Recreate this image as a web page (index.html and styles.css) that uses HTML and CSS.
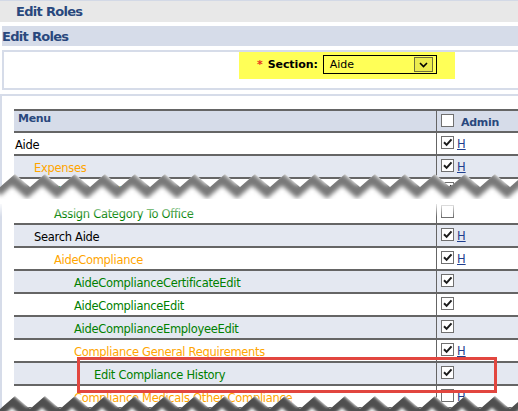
FILE: index.html
```html
<!DOCTYPE html>
<html>
<head>
<meta charset="utf-8">
<title>Edit Roles</title>
<link rel="stylesheet" href="styles.css">
</head>
<body>
<div class="page-title">Edit Roles</div>
<div class="section">
  <div class="section-title">Edit Roles</div>
  <div class="filter-box">
    <div class="filter">
      <span class="req">*</span>
      <span class="filter-label">Section:</span>
      <div class="select">
        <span class="select-value">Aide</span>
        <span class="select-btn"><svg viewBox="0 0 9 6" width="9" height="6"><path d="M1 1l3.5 3.5L8 1"/></svg></span>
      </div>
    </div>
  </div>
</div>
<div class="grid-box">
  <div class="grid">
    <div class="row head">
      <div class="menu-cell head-cell">Menu</div>
      <div class="admin-cell"><span class="cb"></span><span class="head-admin">Admin</span></div>
    </div>
    <div class="row">
      <div class="menu-cell lv0 black">Aide</div>
      <div class="admin-cell"><span class="cb"><svg viewBox="0 0 11 11"><path d="M2 5.3l2.6 2.6 4.9-5.6"/></svg></span><a class="hist">H</a></div>
    </div>
    <div class="row alt">
      <div class="menu-cell lv1 orange">Expenses</div>
      <div class="admin-cell"><span class="cb"><svg viewBox="0 0 11 11"><path d="M2 5.3l2.6 2.6 4.9-5.6"/></svg></span><a class="hist">H</a></div>
    </div>
    <div class="row">
      <div class="menu-cell lv2 green">Expense Category Edit</div>
      <div class="admin-cell"><span class="cb"><svg viewBox="0 0 11 11"><path d="M2 5.3l2.6 2.6 4.9-5.6"/></svg></span></div>
    </div>
    <div class="row">
      <div class="menu-cell lv2 green">Assign Category To Office</div>
      <div class="admin-cell"><span class="cb"></span></div>
    </div>
    <div class="row alt">
      <div class="menu-cell lv1 black">Search Aide</div>
      <div class="admin-cell"><span class="cb"><svg viewBox="0 0 11 11"><path d="M2 5.3l2.6 2.6 4.9-5.6"/></svg></span><a class="hist">H</a></div>
    </div>
    <div class="row">
      <div class="menu-cell lv2 orange">AideCompliance</div>
      <div class="admin-cell"><span class="cb"><svg viewBox="0 0 11 11"><path d="M2 5.3l2.6 2.6 4.9-5.6"/></svg></span><a class="hist">H</a></div>
    </div>
    <div class="row alt">
      <div class="menu-cell lv3 green">AideComplianceCertificateEdit</div>
      <div class="admin-cell"><span class="cb"><svg viewBox="0 0 11 11"><path d="M2 5.3l2.6 2.6 4.9-5.6"/></svg></span></div>
    </div>
    <div class="row">
      <div class="menu-cell lv3 green">AideComplianceEdit</div>
      <div class="admin-cell"><span class="cb"><svg viewBox="0 0 11 11"><path d="M2 5.3l2.6 2.6 4.9-5.6"/></svg></span></div>
    </div>
    <div class="row alt">
      <div class="menu-cell lv3 green">AideComplianceEmployeeEdit</div>
      <div class="admin-cell"><span class="cb"><svg viewBox="0 0 11 11"><path d="M2 5.3l2.6 2.6 4.9-5.6"/></svg></span></div>
    </div>
    <div class="row">
      <div class="menu-cell lv3 orange">Compliance General Requirements</div>
      <div class="admin-cell"><span class="cb"><svg viewBox="0 0 11 11"><path d="M2 5.3l2.6 2.6 4.9-5.6"/></svg></span><a class="hist">H</a></div>
    </div>
    <div class="row alt">
      <div class="menu-cell lv4 green">Edit Compliance History</div>
      <div class="admin-cell"><span class="cb"><svg viewBox="0 0 11 11"><path d="M2 5.3l2.6 2.6 4.9-5.6"/></svg></span></div>
    </div>
    <div class="row">
      <div class="menu-cell lv3 orange">Compliance Medicals Other Compliance</div>
      <div class="admin-cell"><span class="cb"></span><a class="hist">H</a></div>
    </div>
  </div>
</div>

<div class="highlight"></div>

<svg class="tear tear-top" width="518" height="50" viewBox="0 0 518 50">
  <defs>
    <filter id="blurA" x="-10%" y="-50%" width="120%" height="200%"><feGaussianBlur stdDeviation="2.2"/></filter>
    <linearGradient id="fadeA" x1="0" y1="0" x2="0" y2="1">
      <stop offset="0" stop-color="#fff" stop-opacity="0.85"/>
      <stop offset="1" stop-color="#fff" stop-opacity="0"/>
    </linearGradient>
    <clipPath id="clipA">
      <path d="M0,19 L15,6 L30,19 L45,6 L60,19 L75,6 L90,19 L105,6 L120,19 L135,6 L150,19 L165,6 L180,19 L195,6 L210,19 L225,6 L240,19 L255,6 L270,19 L285,6 L300,19 L315,6 L330,19 L345,6 L360,19 L375,6 L390,19 L405,6 L420,19 L435,6 L450,19 L465,6 L480,19 L495,6 L510,19 L525,6 L525,36 L0,36 Z"/>
    </clipPath>
  </defs>
  <path fill="#fff" d="M0,19 L15,6 L30,19 L45,6 L60,19 L75,6 L90,19 L105,6 L120,19 L135,6 L150,19 L165,6 L180,19 L195,6 L210,19 L225,6 L240,19 L255,6 L270,19 L285,6 L300,19 L315,6 L330,19 L345,6 L360,19 L375,6 L390,19 L405,6 L420,19 L435,6 L450,19 L465,6 L480,19 L495,6 L510,19 L525,6 L525,36 L0,36 Z"/>
  <g clip-path="url(#clipA)">
    <polyline filter="url(#blurA)" fill="none" stroke="#787878" stroke-width="10" points="-3,24 12,11 27,24 42,11 57,24 72,11 87,24 102,11 117,24 132,11 147,24 162,11 177,24 192,11 207,24 222,11 237,24 252,11 267,24 282,11 297,24 312,11 327,24 342,11 357,24 372,11 387,24 402,11 417,24 432,11 447,24 462,11 477,24 492,11 507,24 522,11"/>
  </g>
  <rect x="0" y="36" width="518" height="13" fill="url(#fadeA)"/>
</svg>

<svg class="tear tear-bottom" width="518" height="23" viewBox="0 0 518 23">
  <defs>
    <filter id="blurB" x="-10%" y="-50%" width="120%" height="200%"><feGaussianBlur stdDeviation="1.6"/></filter>
    <clipPath id="clipB">
      <path d="M0,21 L15,8 L30,21 L45,8 L60,21 L75,8 L90,21 L105,8 L120,21 L135,8 L150,21 L165,8 L180,21 L195,8 L210,21 L225,8 L240,21 L255,8 L270,21 L285,8 L300,21 L315,8 L330,21 L345,8 L360,21 L375,8 L390,21 L405,8 L420,21 L435,8 L450,21 L465,8 L480,21 L495,8 L510,21 L525,8 L525,40 L0,40 Z"/>
    </clipPath>
  </defs>
  <path fill="#f4f4f4" d="M0,21 L15,8 L30,21 L45,8 L60,21 L75,8 L90,21 L105,8 L120,21 L135,8 L150,21 L165,8 L180,21 L195,8 L210,21 L225,8 L240,21 L255,8 L270,21 L285,8 L300,21 L315,8 L330,21 L345,8 L360,21 L375,8 L390,21 L405,8 L420,21 L435,8 L450,21 L465,8 L480,21 L495,8 L510,21 L525,8 L525,40 L0,40 Z"/>
  <g clip-path="url(#clipB)">
    <polyline filter="url(#blurB)" fill="none" stroke="#505050" stroke-width="10" points="-3,26 12,13 27,26 42,13 57,26 72,13 87,26 102,13 117,26 132,13 147,26 162,13 177,26 192,13 207,26 222,13 237,26 252,13 267,26 282,13 297,26 312,13 327,26 342,13 357,26 372,13 387,26 402,13 417,26 432,13 447,26 462,13 477,26 492,13 507,26 522,13"/>
  </g>
</svg>
</body>
</html>
```

FILE: styles.css
```css
html, body {
  margin: 0;
  padding: 0;
  background: #ffffff;
}

body {
  position: relative;
  width: 518px;
  height: 411px;
  overflow: hidden;
  font-family: "DejaVu Sans", Verdana, sans-serif;
  color: #000;
}

.page-title {
  border-top: 1px solid #d3d9e6;
  background: #e8e8e8;
  height: 21px;
  line-height: 21px;
  padding-left: 16px;
  margin-bottom: 4px;
  font-size: 13px;
  font-weight: bold;
  letter-spacing: -0.7px;
  color: #29487d;
}

.section {
  margin-left: 2px;
}

.section-title {
  background: #d6dce9;
  height: 19px;
  padding-top: 1px;
  line-height: 19px;
  margin-bottom: 4px;
  font-size: 13px;
  font-weight: bold;
  letter-spacing: -0.7px;
  color: #29487d;
}

.filter-box {
  border: 2px solid #d6dce9;
  border-right: none;
  height: 36px;
  margin-bottom: 4px;
}

.filter {
  margin-left: 235px;
  width: 216px;
  height: 27px;
  box-sizing: border-box;
  padding: 3px 0 0 18px;
  background: #ffff57;
  display: flex;
  align-items: flex-start;
}

.req {
  color: #e8321e;
  font-size: 11px;
  font-weight: bold;
  line-height: 19px;
  margin-right: 5px;
}

.filter-label {
  font-size: 11px;
  font-weight: bold;
  line-height: 19px;
  letter-spacing: -0.1px;
  margin-right: 5px;
}

.select {
  width: 114px;
  height: 19px;
  box-sizing: border-box;
  border: 1px solid #000;
  display: flex;
  align-items: flex-start;
  padding-left: 6px;
}

.select-value {
  font-size: 11px;
  line-height: 17px;
}

.select-btn {
  margin-left: auto;
  margin-top: 1px;
  margin-right: 3px;
  width: 19px;
  height: 15px;
  box-sizing: border-box;
  border: 1px solid #6f6f3c;
  background: #ecec4e;
  display: flex;
  align-items: center;
  justify-content: center;
}

.select-btn path {
  fill: none;
  stroke: #000;
  stroke-width: 1.6;
}

.grid-box {
  border-top: 2px solid #d6dce9;
  border-left: 2px solid #d6dce9;
  padding: 13px 0 0 12px;
  height: 302px;
  overflow: hidden;
}

.grid {
  width: 620px;
}

.row {
  display: grid;
  grid-template-columns: 422px 1fr;
  border-bottom: 2px solid #656565;
  background: #ffffff;
}

.row.alt {
  background: #e4e8f1;
}

.row.head {
  border-top: 2px solid #656565;
  background: #d6dce9;
}

.menu-cell {
  height: 21px;
  box-sizing: border-box;
  padding-top: 3px;
  line-height: 18px;
  font-size: 11.5px;
  letter-spacing: -0.3px;
  white-space: nowrap;
}

.head-cell {
  height: 20px;
  padding: 0 0 0 4px;
  line-height: 15px;
  font-size: 11px;
  font-weight: bold;
  letter-spacing: -0.3px;
  color: #29487d;
}

.admin-cell {
  border-left: 1px solid #656565;
  display: flex;
  align-items: flex-start;
  padding: 3px 0 0 4px;
}

.head .admin-cell {
  height: 17px;
}

.head-admin {
  margin-left: 7px;
  margin-top: 2px;
  line-height: 13px;
  font-size: 11px;
  font-weight: bold;
  letter-spacing: -0.3px;
  color: #29487d;
}

.cb {
  display: block;
  width: 13px;
  height: 13px;
  box-sizing: border-box;
  border: 1px solid #707070;
  background: #ffffff;
}

.cb svg {
  display: block;
  width: 11px;
  height: 11px;
}

.cb path {
  fill: none;
  stroke: #1c1c1c;
  stroke-width: 2;
}

.hist {
  margin-left: 3px;
  margin-top: 2px;
  line-height: 13px;
  font-size: 11.5px;
  color: #1f3f8f;
  text-decoration: underline;
}

.lv0 { padding-left: 1px; }
.lv1 { padding-left: 20px; }
.lv2 { padding-left: 40px; }
.lv3 { padding-left: 60px; }
.lv4 { padding-left: 80px; }

.black { color: #000000; }
.orange { color: #ffa500; }
.green { color: #008000; }

.highlight {
  position: absolute;
  left: 77px;
  top: 357px;
  width: 420px;
  height: 36px;
  box-sizing: border-box;
  border: 3px solid #e2463f;
}

.tear {
  position: absolute;
  left: 0;
  display: block;
}

.tear-top {
  top: 168px;
}

.tear-bottom {
  top: 388px;
}
```
